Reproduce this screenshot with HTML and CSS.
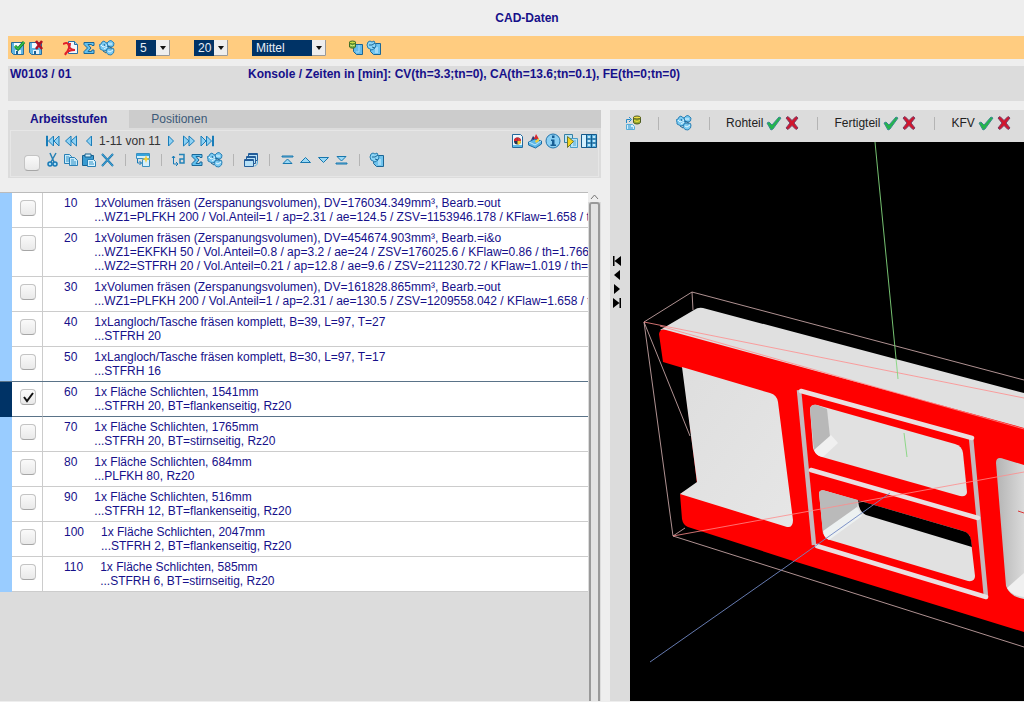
FILE: index.html
```html
<!DOCTYPE html>
<html lang="de">
<head>
<meta charset="utf-8">
<title>CAD-Daten</title>
<link rel="stylesheet" href="styles.css">
</head>
<body>
<svg class="sprite" aria-hidden="true">
  <symbol id="save" viewBox="0 0 16 16"><path d="M1.500 2.500h12v12h-10l-2-2z" fill="#5fb6e2" stroke="#2a6c9b"/><path d="M4 3h7v5H4z" fill="#f4fbff"/><path d="M5 10h6v4H5z" fill="#e6f2fa"/><path d="M6 11h2v3H6z" fill="#1b5f93"/></symbol>
  <symbol id="save-ok" viewBox="0 0 16 16"><use href="#save"/><path d="M5 6l3 3 6-7" fill="none" stroke="#167a28" stroke-width="3"/><path d="M5 6l3 3 6-7" fill="none" stroke="#36c24c" stroke-width="1.500"/></symbol>
  <symbol id="save-no" viewBox="0 0 16 16"><use href="#save"/><path d="M8 1l6 8M14 1L8 9" stroke="#b01225" stroke-width="2.500"/></symbol>
  <symbol id="pdf" viewBox="0 0 16 16"><path d="M5.500 1.500h6l3 3v9h-9z" fill="#f3f8fc" stroke="#2a6ea3"/><path d="M11.500 1.500v3h3" fill="#9fd2f0" stroke="#2a6ea3"/><path d="M0 4c4-2 5-1 6 2 1 3 3 4 6 4-4 0-8 1-10 4M7 3c0 4-2 8-5 12" fill="none" stroke="#e0202a" stroke-width="2"/></symbol>
  <symbol id="sum" viewBox="0 0 16 16"><path d="M3 2.500h10v3h-2l-.5-1H7l3 3.500-3 3.500h3.500l.5-1.500h2v3.500H3v-2L6.500 8 3 4.500z" fill="#62c2f0" stroke="#1a6798"/></symbol>
  <symbol id="gears" viewBox="0 0 16 16"><g fill="#7ccbf2" stroke="#2c82b6"><path d="M3 2l2-1 1 1 2 1 1 2 1 1-1 2-1 2-3 1-2-1-2-1V7L0 5l2-1z"/><path d="M8 3l2-2 2-.5L14 2l1 1-.5 3-2.500 1L9 6z"/><path d="M8 9l2-1 2 1 2-1 1 2-.5 3L12 15l-3-.5L7 12z"/></g><path d="M2 5l2 2 4-2M9 4h4M5 9l3-2M9 11l2 1 3-2" fill="none" stroke="#e4f6ff"/><path d="M8 6l5 2M4 11l3 2M5 4l1 2" stroke="#1c6698"/></symbol>
  <symbol id="db-page" viewBox="0 0 16 16"><path d="M5.500 4.500h9v10h-6l-3-3z" fill="#63baea" stroke="#1c6695"/><path d="M11 5v7h-3" fill="none" stroke="#a8ddf7"/><path d="M1.500 2v5c1 1.500 5 1.500 6 0V2z" fill="#74ad42" stroke="#3d6c27"/><ellipse cx="4.500" cy="2.500" rx="3" ry="1.500" fill="#c9df45" stroke="#3d6c27"/><path d="M2 5q2.500 1.500 5 0" fill="none" stroke="#dcec7d"/></symbol>
  <symbol id="gear-page" viewBox="0 0 16 16"><path d="M5.500 3.500h9v11h-7l-3-3z" fill="#70c4ee" stroke="#1c6695"/><path d="M9 8h3M9 10h3M9 12h3" stroke="#d7f1ff"/><path d="M2 2l2-1 2 1 2-1 1 2 1 2-1 3-3 2-2-1-2-1-1-3z" fill="#8cd5f6" stroke="#267cae"/><path d="M3 5h3l3-2M6 7l3 1" fill="none" stroke="#1c6695"/></symbol>
  <symbol id="prev" viewBox="0 0 16 16"><path d="M10.500 3v10L5.500 8z" fill="#8fd2f4" stroke="#197db9"/></symbol>
  <symbol id="rew" viewBox="0 0 16 16"><path d="M8 3v10L2.500 8zM13.500 3v10L8 8z" fill="#8fd2f4" stroke="#197db9"/></symbol>
  <symbol id="first" viewBox="0 0 16 16"><path d="M1.500 3v10h1V3zM8.500 3v10L3.500 8zM14 3v10L9 8z" fill="#8fd2f4" stroke="#197db9"/></symbol>
  <symbol id="next" viewBox="0 0 16 16"><path d="M5.500 3v10l5-5z" fill="#8fd2f4" stroke="#197db9"/></symbol>
  <symbol id="fwd" viewBox="0 0 16 16"><path d="M2.500 3v10L8 8zM8 3v10l5.500-5z" fill="#8fd2f4" stroke="#197db9"/></symbol>
  <symbol id="last" viewBox="0 0 16 16"><path d="M2 3v10l5-5zM7.500 3v10l5-5zM13.500 3v10h1V3z" fill="#8fd2f4" stroke="#197db9"/></symbol>
  <symbol id="cut" viewBox="0 0 16 16"><path d="M5 1l4 9M11 1L6 10" stroke="#2680b5" stroke-width="1.500"/><circle cx="5" cy="12" r="2" fill="#a9def6" stroke="#1878b5" stroke-width="1.500"/><circle cx="10" cy="12" r="2" fill="#a9def6" stroke="#1878b5" stroke-width="1.500"/></symbol>
  <symbol id="copy" viewBox="0 0 16 16"><g fill="#c6eafa" stroke="#287fb5"><path d="M1.500 2.500h5l2 2v7h-7z"/><path d="M6.500 5.500h5l3 3v5h-8z"/></g><path d="M3 5h3M3 7h3M3 9h3M8 8h3M8 10h5M8 12h5" stroke="#3291c6"/></symbol>
  <symbol id="paste" viewBox="0 0 16 16"><path d="M1.500 3.500h11v10h-11z" fill="#399bd1" stroke="#17608f"/><path d="M4 2h6v3H4z" fill="#d2effb" stroke="#17608f"/><path d="M6.500 7.500h6l2 2v5h-8z" fill="#d9f3fd" stroke="#287fb5"/><path d="M8 10h4M8 12h5" stroke="#3291c6"/></symbol>
  <symbol id="del" viewBox="0 0 16 16"><path d="M3 2l11 12M14 2L3 14" stroke="#1870a7" stroke-width="2"/><path d="M3 2l11 12M14 2L3 14" stroke="#49b5e8" stroke-width=".8"/></symbol>
  <symbol id="win" viewBox="0 0 16 16"><path d="M1.500 1.500h13v5h-13z" fill="#d4effb" stroke="#3990c0"/><path d="M2 3h12" stroke="#35a3dd" stroke-width="2"/><path d="M7.500 7.500h7v7h-7z" fill="#d4effb" stroke="#3990c0"/><path d="M2.500 7v4h4M4.500 9l2 2-2 2" fill="none" stroke="#167bb8"/><path d="M11 3l1 3 3 1-3 1-1 3-1-3-3-1 3-1z" fill="#f7cf35"/></symbol>
  <symbol id="renumber" viewBox="0 0 16 16"><path d="M2.500 4v8h4M1 6l1.500-2L4 6M5 10l2 2-2 2" fill="none" stroke="#167bb8"/><path d="M8 2.500h5v8.500H9V7h4" fill="none" stroke="#2383b8" stroke-width="1.500"/></symbol>
  <symbol id="stack" viewBox="0 0 16 16"><g fill="#b7e1f7" stroke="#245f9a"><path d="M5.500 1.500h9v7h-9z"/><path d="M3.500 4.500h9v7h-9z"/><path d="M1.500 7.500h9v7h-9z"/></g><path d="M6 2h8M4 5h8M2 8h8" stroke="#235c99" stroke-width="2"/><path d="M14.500 9c0 3-1 5-3 5" fill="none" stroke="#4caee0"/></symbol>
  <symbol id="top" viewBox="0 0 16 16"><path d="M3 4h11v1H3zM4 11.500L8.500 7l4.500 4.500z" fill="#9ad8f5" stroke="#1777ae"/></symbol>
  <symbol id="up" viewBox="0 0 16 16"><path d="M3.500 10.500L8.500 5.500l5 5z" fill="#9ad8f5" stroke="#1777ae"/></symbol>
  <symbol id="down" viewBox="0 0 16 16"><path d="M3.500 5.500l5 5 5-5z" fill="#9ad8f5" stroke="#1777ae"/></symbol>
  <symbol id="bottom" viewBox="0 0 16 16"><path d="M4 4.500L8.500 9 13 4.500zM3 11h11v1H3z" fill="#9ad8f5" stroke="#1777ae"/></symbol>
  <symbol id="chart" viewBox="0 0 16 16"><path d="M3.500 1.500h8l2 2v11h-10z" fill="#f0f8fd" stroke="#24699c"/><path d="M4 13h9" stroke="#5fbbe6" stroke-width="2"/><circle cx="8.500" cy="8" r="3.500" fill="#29324e"/><path d="M8.500 8V4.500A3.500 3.500 0 0 0 5 8z" fill="#e0242b"/><path d="M8.500 8V4.500A3.500 3.500 0 0 1 12 8z" fill="#d8353a"/><path d="M8.500 8H12a3.500 3.500 0 0 1-3.500 3.500z" fill="#f3cf35"/></symbol>
  <symbol id="box" viewBox="0 0 16 16"><path d="M1.500 9l6-3 7 2v3l-6 4-7-3z" fill="#5cb7e8" stroke="#1c6da5"/><path d="M2 9l6 3 6-4" fill="none" stroke="#c3eafa"/><path d="M4 7l2-4 3 3z" fill="#303b75"/><path d="M7 6l2-5 3 5z" fill="#d92830"/><path d="M8 8l4-3v3l-3 2z" fill="#efce38"/></symbol>
  <symbol id="info" viewBox="0 0 16 16"><circle cx="8" cy="8" r="7" fill="#8dd0f3" stroke="#2375ac"/><path d="M7 2.500h2.500v2.500H7zM6 6.500h3.500v5H11V13H5.500v-1.500H7V8H6z" fill="#185e94"/></symbol>
  <symbol id="play" viewBox="0 0 16 16"><path d="M1.500 1.500h8v8h-8z" fill="#b8e4f7" stroke="#357fa4"/><path d="M7.500 5.500h7v9h-7z" fill="#b8e4f7" stroke="#4a9dc8"/><path d="M10 8h3M10 10h3M10 12h3" stroke="#51a8d4"/><path d="M4.500 3.500v11l6-6z" fill="#f4d421" stroke="#71772a"/></symbol>
  <symbol id="grid" viewBox="0 0 16 16"><path d="M.5 1.500h15v13H.5z" fill="#5eb3df" stroke="#155a8c"/><path d="M1 2h4v12H1z" fill="#d4f0fd"/><path d="M5.500 2v12M10.500 2v12M6 6h9M6 10h9" stroke="#155a8c"/><path d="M7 3h2v2H7zM12 3h2v2h-2zM7 7h2v2H7zM12 7h2v2h-2zM7 11h2v2H7zM12 11h2v2h-2z" fill="#c2e7f9"/></symbol>
  <symbol id="db-load" viewBox="0 0 16 16"><path d="M8.500 2.500v5c1 2 6 2 7 0v-5z" fill="#9aab2d" stroke="#4c5a22"/><ellipse cx="12" cy="2.500" rx="3.500" ry="1.500" fill="#f1df43" stroke="#4c5a22"/><path d="M9 5.500q3 2 6 0" fill="none" stroke="#f1df43"/><path d="M1.500 8V4.500h4M4 2l2.500 2.500L4 7" fill="none" stroke="#258ac7"/><path d="M1.500 9.500h6l2 2v3h-8z" fill="#d4effb" stroke="#56acd7"/><path d="M3 11h3M3 13h5" stroke="#258ac7"/></symbol>
  <symbol id="ok" viewBox="0 0 16 16"><path d="M1 8l2-1 3 3 7-8 2 1-8 11-2 1z" fill="#24b64b" stroke="#3a8a8f"/></symbol>
  <symbol id="no" viewBox="0 0 16 16"><path d="M2 3l2-1.500 4 4 4-4L14 3l-4 5 4 5-2 1.500-4-4-4 4L2 13l4-5z" fill="#d3152c" stroke="#7a3a62"/></symbol>
</svg>

<h1 class="title">CAD-Daten</h1>

<div class="toolbar">
  <button class="icon" aria-label="Speichern"><svg><use href="#save-ok"/></svg></button>
  <button class="icon" aria-label="Verwerfen"><svg><use href="#save-no"/></svg></button>
  <span class="gap"></span>
  <button class="icon" aria-label="PDF"><svg><use href="#pdf"/></svg></button>
  <button class="icon" aria-label="Summe"><svg><use href="#sum"/></svg></button>
  <button class="icon" aria-label="Berechnen"><svg><use href="#gears"/></svg></button>
  <select class="pick pick-first" aria-label="Stufe"><option>5</option></select>
  <select class="pick" aria-label="Schritt"><option>20</option></select>
  <select class="pick pick-wide" aria-label="Genauigkeit"><option>Mittel</option></select>
  <button class="icon" aria-label="Aus Datenbank"><svg><use href="#db-page"/></svg></button>
  <button class="icon" aria-label="Einstellungen"><svg><use href="#gear-page"/></svg></button>
</div>

<div class="summary">
  <span class="part">W0103 / 01</span>
  <span>Konsole / Zeiten in [min]: CV(th=3.3;tn=0), CA(th=13.6;tn=0.1), FE(th=0;tn=0)</span>
</div>

<main class="work">
  <section class="left">
    <div class="panel">
      <nav class="tabs">
        <a href="#stufen" class="tab active">Arbeitsstufen</a>
        <a href="#positionen" class="tab">Positionen</a>
      </nav>
      <div class="tools">
        <input type="checkbox" class="check" aria-label="Alle auswählen">
        <div class="tool-rows">
          <div class="tool-row">
            <button class="icon" aria-label="Anfang"><svg><use href="#first"/></svg></button>
            <button class="icon" aria-label="Zurück blättern"><svg><use href="#rew"/></svg></button>
            <button class="icon" aria-label="Zurück"><svg><use href="#prev"/></svg></button>
            <span class="range">1-11 von 11</span>
            <button class="icon" aria-label="Weiter"><svg><use href="#next"/></svg></button>
            <button class="icon" aria-label="Vor blättern"><svg><use href="#fwd"/></svg></button>
            <button class="icon" aria-label="Ende"><svg><use href="#last"/></svg></button>
            <span class="spring"></span>
            <button class="icon" aria-label="Diagramm"><svg><use href="#chart"/></svg></button>
            <button class="icon" aria-label="Teile"><svg><use href="#box"/></svg></button>
            <button class="icon" aria-label="Information"><svg><use href="#info"/></svg></button>
            <button class="icon" aria-label="Ausführen"><svg><use href="#play"/></svg></button>
            <button class="icon" aria-label="Spalten"><svg><use href="#grid"/></svg></button>
          </div>
          <div class="tool-row">
            <button class="icon" aria-label="Ausschneiden"><svg><use href="#cut"/></svg></button>
            <button class="icon" aria-label="Kopieren"><svg><use href="#copy"/></svg></button>
            <button class="icon" aria-label="Einfügen"><svg><use href="#paste"/></svg></button>
            <button class="icon" aria-label="Löschen"><svg><use href="#del"/></svg></button>
            <span class="sep"></span>
            <button class="icon" aria-label="Neu"><svg><use href="#win"/></svg></button>
            <span class="sep"></span>
            <button class="icon" aria-label="Nummerieren"><svg><use href="#renumber"/></svg></button>
            <button class="icon" aria-label="Summe"><svg><use href="#sum"/></svg></button>
            <button class="icon" aria-label="Berechnen"><svg><use href="#gears"/></svg></button>
            <span class="sep"></span>
            <button class="icon" aria-label="Stapel"><svg><use href="#stack"/></svg></button>
            <span class="sep"></span>
            <button class="icon" aria-label="Ganz nach oben"><svg><use href="#top"/></svg></button>
            <button class="icon" aria-label="Nach oben"><svg><use href="#up"/></svg></button>
            <button class="icon" aria-label="Nach unten"><svg><use href="#down"/></svg></button>
            <button class="icon" aria-label="Ganz nach unten"><svg><use href="#bottom"/></svg></button>
            <span class="sep"></span>
            <button class="icon" aria-label="Einstellungen"><svg><use href="#gear-page"/></svg></button>
          </div>
        </div>
      </div>
    </div>

    <div class="list">
      <div class="list-body">
        <table class="steps">
          <colgroup><col class="col-mark"><col class="col-check"><col></colgroup>
          <tbody>
          <tr><td class="mark"></td><td class="pickcell"><input type="checkbox" class="check" aria-label="10"></td><td class="cell"><div class="step"><span>10</span><span>1xVolumen fräsen (Zerspanungsvolumen), DV=176034.349mm³, Bearb.=out<br>...WZ1=PLFKH 200 / Vol.Anteil=1 / ap=2.31 / ae=124.5 / ZSV=1153946.178 / KFlaw=1.658 / th=0.7</span></div></td></tr>
          <tr><td class="mark"></td><td class="pickcell"><input type="checkbox" class="check" aria-label="20"></td><td class="cell"><div class="step"><span>20</span><span>1xVolumen fräsen (Zerspanungsvolumen), DV=454674.903mm³, Bearb.=i&amp;o<br>...WZ1=EKFKH 50 / Vol.Anteil=0.8 / ap=3.2 / ae=24 / ZSV=176025.6 / KFlaw=0.86 / th=1.766<br>...WZ2=STFRH 20 / Vol.Anteil=0.21 / ap=12.8 / ae=9.6 / ZSV=211230.72 / KFlaw=1.019 / th=0.4</span></div></td></tr>
          <tr><td class="mark"></td><td class="pickcell"><input type="checkbox" class="check" aria-label="30"></td><td class="cell"><div class="step"><span>30</span><span>1xVolumen fräsen (Zerspanungsvolumen), DV=161828.865mm³, Bearb.=out<br>...WZ1=PLFKH 200 / Vol.Anteil=1 / ap=2.31 / ae=130.5 / ZSV=1209558.042 / KFlaw=1.658 / th=0.7</span></div></td></tr>
          <tr><td class="mark"></td><td class="pickcell"><input type="checkbox" class="check" aria-label="40"></td><td class="cell"><div class="step"><span>40</span><span>1xLangloch/Tasche fräsen komplett, B=39, L=97, T=27<br>...STFRH 20</span></div></td></tr>
          <tr><td class="mark"></td><td class="pickcell"><input type="checkbox" class="check" aria-label="50"></td><td class="cell"><div class="step"><span>50</span><span>1xLangloch/Tasche fräsen komplett, B=30, L=97, T=17<br>...STFRH 16</span></div></td></tr>
          <tr class="selected"><td class="mark"></td><td class="pickcell"><input type="checkbox" class="check" aria-label="60" checked></td><td class="cell"><div class="step"><span>60</span><span>1x Fläche Schlichten, 1541mm<br>...STFRH 20, BT=flankenseitig, Rz20</span></div></td></tr>
          <tr><td class="mark"></td><td class="pickcell"><input type="checkbox" class="check" aria-label="70"></td><td class="cell"><div class="step"><span>70</span><span>1x Fläche Schlichten, 1765mm<br>...STFRH 20, BT=stirnseitig, Rz20</span></div></td></tr>
          <tr><td class="mark"></td><td class="pickcell"><input type="checkbox" class="check" aria-label="80"></td><td class="cell"><div class="step"><span>80</span><span>1x Fläche Schlichten, 684mm<br>...PLFKH 80, Rz20</span></div></td></tr>
          <tr><td class="mark"></td><td class="pickcell"><input type="checkbox" class="check" aria-label="90"></td><td class="cell"><div class="step"><span>90</span><span>1x Fläche Schlichten, 516mm<br>...STFRH 12, BT=flankenseitig, Rz20</span></div></td></tr>
          <tr><td class="mark"></td><td class="pickcell"><input type="checkbox" class="check" aria-label="100"></td><td class="cell"><div class="step"><span>100</span><span>1x Fläche Schlichten, 2047mm<br>...STFRH 2, BT=flankenseitig, Rz20</span></div></td></tr>
          <tr><td class="mark"></td><td class="pickcell"><input type="checkbox" class="check" aria-label="110"></td><td class="cell"><div class="step"><span>110</span><span>1x Fläche Schlichten, 585mm<br>...STFRH 6, BT=stirnseitig, Rz20</span></div></td></tr>
          </tbody>
        </table>
      </div>
      <div class="scroll">
        <svg class="scroll-up" viewBox="0 0 13 10"><path d="M3 7l3.500-4L10 7" fill="none" stroke="#777"/></svg>
        <div class="thumb"></div>
      </div>
    </div>
  </section>

  <section class="right">
    <div class="view-tools">
      <button class="icon" aria-label="Laden"><svg><use href="#db-load"/></svg></button>
      <span class="bar"></span>
      <button class="icon" aria-label="Berechnen"><svg><use href="#gears"/></svg></button>
      <span class="bar"></span>
      <span class="caption">Rohteil</span>
      <button class="icon" aria-label="Rohteil ein"><svg><use href="#ok"/></svg></button>
      <button class="icon" aria-label="Rohteil aus"><svg><use href="#no"/></svg></button>
      <span class="bar"></span>
      <span class="caption">Fertigteil</span>
      <button class="icon" aria-label="Fertigteil ein"><svg><use href="#ok"/></svg></button>
      <button class="icon" aria-label="Fertigteil aus"><svg><use href="#no"/></svg></button>
      <span class="bar"></span>
      <span class="caption">KFV</span>
      <button class="icon" aria-label="KFV ein"><svg><use href="#ok"/></svg></button>
      <button class="icon" aria-label="KFV aus"><svg><use href="#no"/></svg></button>
    </div>
    <div class="view-row">
      <div class="splitter">
        <button aria-label="Ganz links"><svg viewBox="0 0 10 10"><path d="M1 0h1.500v10H1zM9 0v10L2.500 5z"/></svg></button>
        <button aria-label="Links"><svg viewBox="0 0 10 10"><path d="M8 0v10L2 5z"/></svg></button>
        <button aria-label="Rechts"><svg viewBox="0 0 10 10"><path d="M2 0v10l6-5z"/></svg></button>
        <button aria-label="Ganz rechts"><svg viewBox="0 0 10 10"><path d="M9 0H7.500v10H9zM1 0v10l6.500-5z"/></svg></button>
      </div>
      <svg class="viewer" viewBox="630 142 394 559" preserveAspectRatio="xMinYMin slice" role="img" aria-label="3D-Ansicht Konsole">
        <defs>
          <linearGradient id="pocket" x1="0" y1="0" x2="1" y2="0"><stop offset="0" stop-color="#b4b4b4"/><stop offset="1" stop-color="#dadada"/></linearGradient>
          <linearGradient id="face" x1="0" y1="0" x2="1" y2="1"><stop offset="0" stop-color="#dedede"/><stop offset="1" stop-color="#e6e6e6"/></linearGradient>
        </defs>
        <path d="M630 142h394v559H630z"/>
        <path d="M660 330l34-20q4-3 9-2L1024 393v36z" fill="#e0e0e0"/>
        <path d="M659 334q1-6 7-4L1024 428v204L790 560 688 527q-5-2-6-8l-2-25 17-10-14-116-20-6z" fill="#f00"/>
        <path d="M682 367l88 26q7 2 8 9l15 118q0 8-6 7L680 494l17-12z" fill="url(#face)"/>
        <!-- milled grooves -->
        <path d="M799 390l15 155" fill="none" stroke="#c3b9bd" stroke-width="4.500"/>
        <path d="M971 437l15 160" fill="none" stroke="#c3b9bd" stroke-width="4.500"/>
        <path d="M801 391l171 47M811 470l167 48M817 546l169 51" fill="none" stroke="#eadfe1" stroke-width="4.500" stroke-linecap="round"/>
        <!-- upper pocket -->
        <path d="M810 409q1-5 7-4L955 444q7 2 8 9l4 39q0 5-7 4L822 457q-7-2-9-9z" fill="#e1e1e1"/>
        <path d="M810 409q1-5 7-4l10 4 3 28-16 14z" fill="#b8b8b8"/>
        <path d="M814 450l17-15 7 8-15 14q-7-1-9-7z" fill="#f0f0f0"/>
        <!-- lower pocket -->
        <path d="M819 493q1-4 7-2l137 40q7 2 8 10l4 35q0 6-7 5L830 540q-6-2-7-8z" fill="#e1e1e1"/>
        <path d="M857 500l106 31q7 2 8 9l1 7-106-32q-7-3-8-14z"/>
        <path d="M819 493q1-4 7-2l32 9-1 10-34 24z" fill="#bababa"/>
        <path d="M823 531l34-24 5 9-33 24q-5-2-6-9z" fill="#edf1f1"/>
        <!-- right pocket -->
        <path d="M996 463q0-7 8-4l20 6v134q-14-2-18-13z" fill="url(#pocket)"/>
        <path d="M1007 588l17-15v24q-12-1-17-9z" fill="#f0f0f0"/>
        <path d="M1018 511l6 2" stroke="#d33"/>
        <!-- stock outline -->
        <g fill="none" stroke="#dcb6b6" stroke-width=".8">
          <path d="M644 322l48-30 332 88M692 292l1 18M644 322l29 214 351 111M644 322l46 114M673 536l12-8"/>
        </g>
        <g fill="none" stroke="#ff8c8c" stroke-width=".8">
          <path d="M644 322l380 76M660 326l364 103M673 536l351-64"/>
        </g>
        <!-- axes -->
        <path d="M875 142l23 237M904 433l3 24" fill="none" stroke="#82d67d" stroke-width=".9"/>
        <path d="M650 662l140-98 100-71" fill="none" stroke="#7088c4" stroke-width=".9"/>
      </svg>
    </div>
  </section>
</main>
</body>
</html>
```
FILE: styles.css
```css
* { box-sizing: border-box; }
html, body { height: 100%; }
body {
  margin: 0;
  display: flex;
  flex-direction: column;
  overflow: hidden;
  background: #eee;
  color: #16108a;
  font: 12px/14px "Liberation Sans", Arial, sans-serif;
}
.sprite { position: absolute; width: 0; height: 0; }
button { padding: 0; border: 0; background: none; color: inherit; }

.title {
  margin: 0;
  padding: 11px 0 11px 30px;
  font-size: 12px;
  text-align: center;
}

.icon { flex: none; width: 18px; height: 18px; display: grid; place-items: center; }
.icon svg { width: 16px; height: 16px; display: block; }

.toolbar {
  display: flex;
  align-items: center;
  height: 23px;
  margin-left: 8px;
  padding-left: 1px;
  background: #ffcc80;
}
.gap { width: 17px; }
.pick {
  appearance: none;
  width: 34px;
  height: 16px;
  margin: 0 24px 0 0;
  padding: 0 16px 0 4px;
  border: 0;
  border-radius: 0;
  background: #003366 url("data:image/svg+xml,%3Csvg xmlns='http://www.w3.org/2000/svg' width='14' height='16'%3E%3Cpath d='M0 0h14v16H0z' fill='%23eee'/%3E%3Cpath d='M13.500 0v15.500H0' fill='none' stroke='%23999'/%3E%3Cpath d='M4 6h6L7 10z' fill='%23111'/%3E%3C/svg%3E") right center no-repeat;
  color: #e8eef5;
  font: 12px/16px "Liberation Sans", Arial, sans-serif;
}
.pick-first { margin-left: 20px; }
.pick-wide { width: 74px; margin-right: 21px; }

.summary {
  display: flex;
  height: 35px;
  margin: 7px 0 9px 8px;
  padding: 1px 2px;
  background: #dcdcdc;
  font-weight: bold;
}
.part { width: 238px; }

.work { flex: 1; min-height: 0; display: flex; gap: 9px; margin-bottom: 1px; }
.left { flex: 0 0 58.7%; min-width: 0; display: flex; flex-direction: column; }

.panel { margin-left: 8px; padding-bottom: 1px; background: #dcdcdc; }
.tabs { display: flex; height: 18px; background: #ccc; }
.tab { padding: 2px 22px; color: #3c5a78; text-decoration: none; }
.tab.active { background: #dcdcdc; color: #16108a; font-weight: bold; }
.tools {
  display: flex;
  align-items: flex-end;
  margin: 2px 2px 0;
  padding: 1px 0 5px 13px;
  border: 1px solid #e6e6e6;
}
.tool-rows { flex: 1; display: flex; flex-direction: column; gap: 1px; padding: 0 0 2px 4px; }
.tool-row { display: flex; align-items: center; }
.range { padding: 0 1px; color: #333; }
.spring { flex: 1; }
.sep { flex: none; width: 18px; height: 12px; background: linear-gradient(#b4b4b4, #b4b4b4) center / 1px 100% no-repeat; }

.check {
  appearance: none;
  flex: none;
  width: 16px;
  height: 16px;
  margin: 0;
  border: 1px solid #c4c4c4;
  border-bottom-color: #a6a6a6;
  border-radius: 4px;
  background: linear-gradient(#fafafa, #e9e9e9);
}
.check:checked {
  background: url("data:image/svg+xml,%3Csvg xmlns='http://www.w3.org/2000/svg' width='14' height='14'%3E%3Cpath d='M3 7l3 4 6-8' fill='none' stroke='%23111' stroke-width='2'/%3E%3C/svg%3E") center no-repeat, linear-gradient(#fafafa, #e9e9e9);
}

.list { flex: 1; min-height: 0; display: flex; margin-top: 14px; background: #dcdcdc; }
.list-body { flex: 1; min-width: 0; overflow: hidden; border-top: 1px solid #bbb; }
.steps { width: 100%; table-layout: fixed; border-collapse: separate; border-spacing: 0; background: #fff; }
.col-mark { width: 12px; }
.col-check { width: 31px; }
.steps td { padding: 0; border-bottom: 1px solid #ccc; }
.steps .mark { background: #99ccff; border-bottom-color: #99ccff; }
.steps .pickcell { padding: 7px 0 0 8px; border-right: 1px solid #ccc; vertical-align: top; }
.steps .check { display: block; }
.steps .cell { padding: 3px 0 3px 21px; overflow: hidden; white-space: nowrap; }
.step { display: flex; gap: 17px; }
.steps .selected td { border-bottom-color: #5a7388; box-shadow: 0 -1px #5a7388; }
.steps .selected .mark { background: #003366; border-bottom-color: #003366; }

.scroll { width: 13px; display: flex; flex-direction: column; background: #dcdcdc; }
.scroll-up { width: 13px; height: 10px; background: #eee; }
.thumb { flex: 1; margin: 0 1px; border: 2px solid #999; border-bottom: 0; border-radius: 3px 3px 0 0; background: #e2e2e2; }

.right { flex: 1; min-width: 0; display: flex; flex-direction: column; background: #dcdcdc; overflow: hidden; }
.view-tools { display: flex; align-items: center; height: 32px; padding: 0 0 6px 14px; color: #222; }
.bar { flex: none; width: 1px; height: 13px; margin: 0 16px; background: #b4b4b4; }
.caption { padding-right: 2px; }
.view-row { flex: 1; min-height: 0; display: flex; }
.splitter { flex: none; width: 20px; padding-top: 114px; display: flex; flex-direction: column; gap: 4px; }
.splitter button { height: 10px; padding-left: 2px; }
.splitter svg { width: 10px; height: 10px; display: block; }
.viewer { flex: 1; min-width: 0; height: 100%; background: #000; }
```
